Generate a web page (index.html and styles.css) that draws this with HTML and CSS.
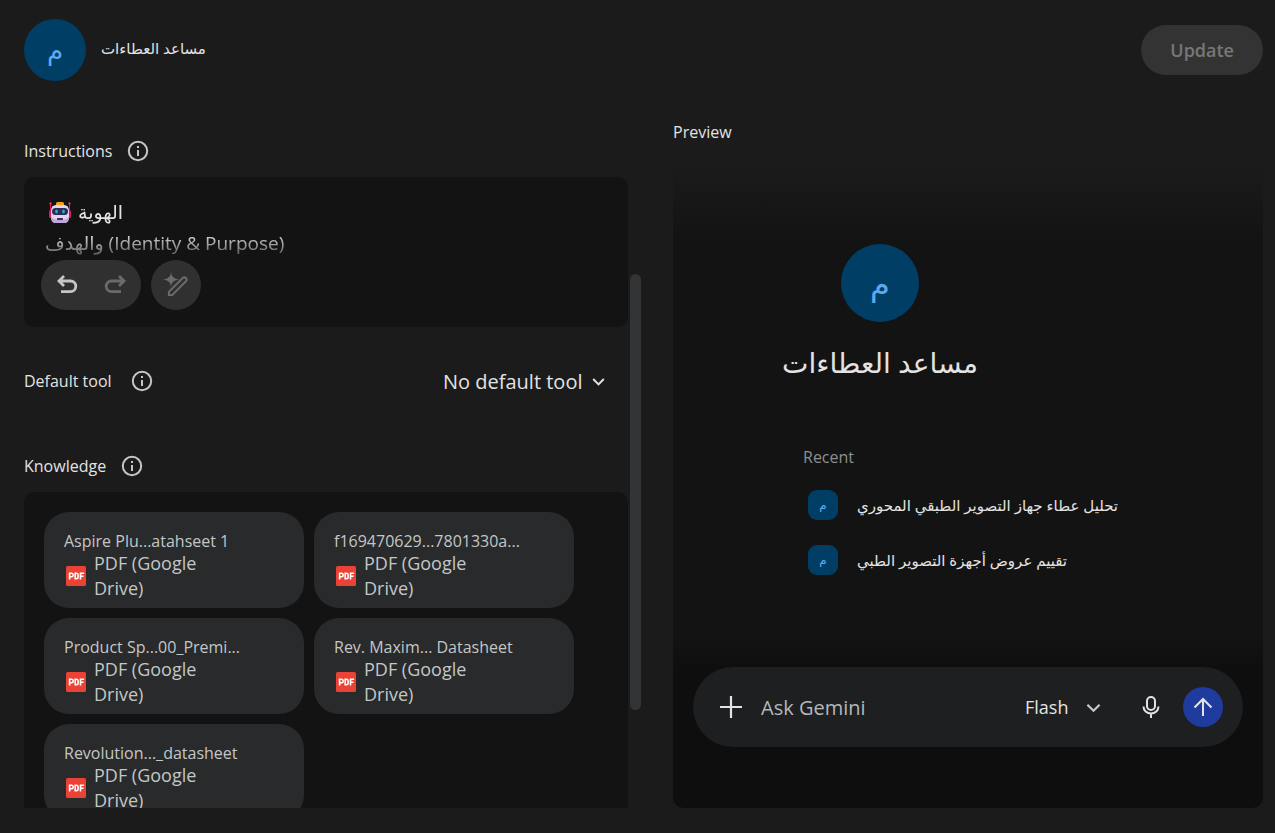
FILE: index.html
```html
<!DOCTYPE html>
<html lang="en">
<head>
    <meta charset="UTF-8">
    <meta name="viewport" content="width=device-width, initial-scale=1.0">
    <title>مساعد العطاءات</title>
    <link rel="stylesheet" href="styles.css">
</head>
<body>
    <svg class="sprite" aria-hidden="true">
        <symbol id="info" viewBox="0 0 22 22">
            <circle cx="11" cy="11" r="9.2" fill="none" stroke="currentColor" stroke-width="2"/>
            <path d="M10 10h2v6h-2zM10 6h2v2h-2z" fill="currentColor"/>
        </symbol>
        <symbol id="chevron" viewBox="0 0 16 16">
            <path d="M1.5 5L8 11.5 14.5 5" fill="none" stroke="currentColor" stroke-width="2.4"/>
        </symbol>
        <symbol id="pdf" viewBox="0 0 20 20">
            <rect width="20" height="20" rx="1.5" fill="#ea4335"/>
            <g fill="none" stroke="#fff" stroke-width="1.6">
                <path d="M3.6 13.5V7.3h2.2q1.4 0 1.4 1.7t-1.4 1.7H3.6"/>
                <path d="M9.2 7.3v5.4h1q1.9 0 1.9-1.7V9q0-1.7-1.9-1.7z"/>
                <path d="M14.5 13.5V7.3h3.6M14.5 10.3h3"/>
            </g>
        </symbol>
    </svg>

    <header class="header">
        <span class="avatar">م</span>
        <h1 class="name">مساعد العطاءات</h1>
        <button class="update" disabled>Update</button>
    </header>

    <main class="main">
        <section class="editor">
            <div class="scroll">
                <div class="row">
                    <label for="instructions">Instructions</label>
                    <button class="info" aria-label="About instructions"><svg><use href="#info"/></svg></button>
                </div>
                <div class="box instructions">
                    <svg class="robot" viewBox="0 0 22 22" aria-hidden="true">
                        <path d="M1.5 1v8M20.5 1v8" stroke="#d81b60" stroke-width="1"/>
                        <circle cx="1.5" cy="1.5" r="1.2" fill="#f0285a"/>
                        <circle cx="20.5" cy="1.5" r="1.2" fill="#f0285a"/>
                        <rect x="0" y="8" width="3" height="8" rx="1.5" fill="#d81b60"/>
                        <rect x="19" y="8" width="3" height="8" rx="1.5" fill="#d81b60"/>
                        <rect x="7" y="0" width="8" height="4" rx="1.5" fill="#f9a11b"/>
                        <path d="M7 3h8q5 0 5 6v6q0 6-5 6H7q-5 0-5-6V9q0-6 5-6z" fill="#e3d4ee"/>
                        <path d="M2.2 15q.3 6 4.8 6h8q4.5 0 4.8-6-2 3-8.8 3t-8.800-3z" fill="#c3a5dd"/>
                        <rect x="3" y="6" width="16" height="7" rx="3.5" fill="#2f2a4f"/>
                        <ellipse cx="7.5" cy="9.5" rx="1.3" ry="2" fill="#27a9ef"/>
                        <ellipse cx="14.5" cy="9.5" rx="1.3" ry="2" fill="#27a9ef"/>
                        <rect x="8" y="16" width="6" height="2" rx=".5" fill="#3b3158"/>
                    </svg>
                    <textarea id="instructions" dir="ltr">الهوية
والهدف (Identity &amp; Purpose)</textarea>
                    <div class="tools">
                        <div class="pill">
                            <button aria-label="Undo">
                                <svg viewBox="0 0 24 24"><path d="M10 3L5 8l5 5M5 8h11.5a5.3 5.3 0 0 1 0 10.600H7" fill="none" stroke="currentColor" stroke-width="2.8"/></svg>
                            </button>
                            <button aria-label="Redo" disabled>
                                <svg viewBox="0 0 24 24"><path d="M15 3l5 5-5 5M20 8H7.5a5.3 5.3 0 0 0 0 10.600H17" fill="none" stroke="currentColor" stroke-width="2.8"/></svg>
                            </button>
                        </div>
                        <button class="round" aria-label="Rewrite" disabled>
                            <svg class="pen" viewBox="0 0 26 26">
                                <path d="M8 0q.3 7 8 7.500-7.700.5-8 7.500-.3-7-8-7.500 7.700-.5 8-7.500z" fill="currentColor"/>
                                <path d="M5.900 23.100v-3.300L19.700 6q1.600-1.500 3.200 0 1.500 1.600 0 3.200L9.200 23.100z" fill="none" stroke="currentColor" stroke-width="2"/>
                            </svg>
                        </button>
                    </div>
                </div>

                <div class="row tool-row">
                    <label for="tool">Default tool</label>
                    <button class="info wide" aria-label="About default tool"><svg><use href="#info"/></svg></button>
                    <span class="select">
                        <select id="tool"><option>No default tool</option></select>
                        <svg><use href="#chevron"/></svg>
                    </span>
                </div>

                <div class="row knowledge-row">
                    <h2>Knowledge</h2>
                    <button class="info" aria-label="About knowledge"><svg><use href="#info"/></svg></button>
                </div>
                <ul class="box files">
                    <li class="file">
                        <h3>Aspire Plu...atahseet 1</h3>
                        <p><svg><use href="#pdf"/></svg><span>PDF (Google Drive)</span></p>
                    </li>
                    <li class="file">
                        <h3>f169470629...7801330a...</h3>
                        <p><svg><use href="#pdf"/></svg><span>PDF (Google Drive)</span></p>
                    </li>
                    <li class="file">
                        <h3>Product Sp...00_Premi...</h3>
                        <p><svg><use href="#pdf"/></svg><span>PDF (Google Drive)</span></p>
                    </li>
                    <li class="file">
                        <h3>Rev. Maxim... Datasheet</h3>
                        <p><svg><use href="#pdf"/></svg><span>PDF (Google Drive)</span></p>
                    </li>
                    <li class="file">
                        <h3>Revolution..._datasheet</h3>
                        <p><svg><use href="#pdf"/></svg><span>PDF (Google Drive)</span></p>
                    </li>
                </ul>
            </div>
            <div class="thumb"></div>
        </section>

        <section class="preview">
            <h2>Preview</h2>
            <div class="chat">
                <div class="hero">
                    <span class="avatar large">م</span>
                    <p class="title">مساعد العطاءات</p>
                </div>
                <div class="recent">
                    <h3>Recent</h3>
                    <a href="#"><span class="avatar small">م</span><span dir="rtl">تحليل عطاء جهاز التصوير الطبقي المحوري</span></a>
                    <a href="#"><span class="avatar small">م</span><span dir="rtl">تقييم عروض أجهزة التصوير الطبي</span></a>
                </div>
                <form class="composer">
                    <button type="button" class="icon" aria-label="Add files">
                        <svg viewBox="0 0 24 24"><path d="M12 1v22M1 12h22" stroke="currentColor" stroke-width="2.2"/></svg>
                    </button>
                    <input type="text" placeholder="Ask Gemini" aria-label="Ask Gemini">
                    <span class="select model">
                        <select aria-label="Model"><option>Flash</option></select>
                        <svg><use href="#chevron"/></svg>
                    </span>
                    <button type="button" class="icon" aria-label="Use microphone">
                        <svg viewBox="0 0 24 24" fill="none" stroke="currentColor" stroke-width="2"><rect x="8" y="2" width="8" height="13" rx="4"/><path d="M4.500 11.500a7.500 7 0 0 0 15 0M12 18.500V23"/></svg>
                    </button>
                    <button type="button" class="send" aria-label="Send">
                        <svg viewBox="0 0 20 20"><path d="M10 19V2M1.500 10.500L10 2l8.500 8.500" fill="none" stroke="currentColor" stroke-width="2"/></svg>
                    </button>
                </form>
            </div>
        </section>
    </main>
</body>
</html>
```
FILE: styles.css
```css
*{
    margin: 0;
    padding: 0;
    box-sizing: border-box;
}
body{
    height: 100vh;
    display: flex;
    flex-direction: column;
    overflow: hidden;
    background-color: #1b1b1b;
    color: #e3e3e3;
    font-family: "Open Sans", "DejaVu Sans", sans-serif;
    font-size: 16px;
    line-height: 20px;
}
h1, h2, h3{
    font-size: 16px;
    font-weight: 500;
}
button, select, input, textarea{
    border: 0;
    background: none;
    color: inherit;
    font: inherit;
    outline: none;
}
button{
    display: flex;
    align-items: center;
    justify-content: center;
}
label{
    font-weight: 500;
}
.sprite{
    position: absolute;
    width: 0;
    height: 0;
}
.header{
    display: flex;
    align-items: center;
    gap: 15px;
    height: 100px;
    padding: 0 12px 0 24px;
}
.avatar{
    display: flex;
    align-items: center;
    justify-content: center;
    flex: none;
    width: 62px;
    height: 62px;
    border-radius: 50%;
    background-color: #003e66;
    color: #5ca9ee;
    font-size: 26px;
}
.name{
    flex: 1;
    padding-bottom: 4px;
    font-size: 15px;
}
.update{
    height: 50px;
    padding: 0 29px;
    border-radius: 25px;
    background-color: #333;
    color: #777;
    font-size: 18px;
    font-weight: 600;
}
.main{
    flex: 1;
    min-height: 0;
    display: grid;
    grid-template-columns: 617fr 590fr;
    gap: 32px;
    padding: 0 12px 25px 24px;
}

/* left side */
.editor{
    position: relative;
    min-height: 0;
    padding-right: 13px;
}
.scroll{
    height: 100%;
    padding-top: 35px;
    overflow: hidden;
}
.thumb{
    position: absolute;
    right: 0;
    top: 174px;
    width: 11px;
    height: 436px;
    border-radius: 6px;
    background-color: #333436;
}
.row{
    display: flex;
    align-items: center;
    gap: 15px;
    height: 32px;
    margin-bottom: 10px;
}
.info svg{
    width: 22px;
    height: 22px;
    color: #c4c7c5;
}
.wide{
    margin-left: 4px;
}
.box{
    border-radius: 10px;
    background-color: #131313;
}
.instructions{
    position: relative;
    height: 150px;
    padding: 17px;
}
.robot{
    position: absolute;
    left: 25px;
    top: 25px;
    width: 22px;
    height: 22px;
}
.instructions textarea{
    display: block;
    width: 100%;
    height: 66px;
    padding: 3px 4px;
    overflow: hidden;
    resize: none;
    font-size: 19px;
    font-weight: 500;
    line-height: 31px;
    text-indent: 33px;
    -webkit-mask-image: linear-gradient(#000 60%, transparent 110%);
    mask-image: linear-gradient(#000 60%, transparent 110%);
}
.tools{
    display: flex;
    gap: 10px;
}
.tools button{
    width: 50px;
    height: 50px;
    color: #c4c7c5;
}
.tools button:disabled{
    color: #6b6b6b;
}
.tools svg{
    width: 24px;
    height: 24px;
}
.tools .pen{
    width: 26px;
    height: 26px;
}
.pill{
    display: flex;
    border-radius: 25px;
    background-color: #303030;
}
.round{
    border-radius: 50%;
    background-color: #303030;
}
.tool-row{
    height: 40px;
    margin-top: 34px;
}
.select{
    display: flex;
    align-items: center;
    gap: 9px;
    margin-left: auto;
    padding-right: 23px;
    font-size: 20px;
    line-height: 25px;
}
.select select{
    appearance: none;
}
.select svg{
    width: 13px;
    height: 13px;
}
.knowledge-row{
    margin-top: 49px;
}
.files{
    display: grid;
    grid-template-columns: repeat(auto-fill, 260px);
    gap: 10px;
    padding: 20px;
    list-style: none;
}
.file{
    height: 96px;
    padding: 20px 20px 6px;
    border-radius: 25px;
    background-color: #282a2c;
    color: #c4c7c5;
}
.file h3{
    font-weight: 400;
    line-height: 19px;
}
.file p{
    display: flex;
    align-items: center;
    gap: 8px;
    padding: 0 60px 0 2px;
    font-size: 18px;
    line-height: 25px;
}
.file svg{
    flex: none;
    width: 20px;
    height: 20px;
}

/* right side */
.preview{
    display: flex;
    flex-direction: column;
    gap: 20px;
    min-height: 0;
    padding-top: 22px;
}
.chat{
    flex: 1;
    display: flex;
    flex-direction: column;
    padding: 82px 20px 61px;
    border-radius: 10px;
    background: linear-gradient(#1b1b1b, #131313 80px, #131313 470px, #0e0e0e 510px);
}
.hero{
    display: flex;
    flex-direction: column;
    align-items: center;
    gap: 18px;
    width: 68%;
}
.large{
    width: 78px;
    height: 78px;
    font-size: 32px;
}
.title{
    font-size: 28px;
    line-height: 44px;
}
.recent{
    display: flex;
    flex-direction: column;
    gap: 25px;
    margin: 63px 0 0 110px;
}
.recent h3{
    margin-bottom: -2px;
    color: #8e8e8e;
    font-weight: 400;
}
.recent a{
    display: flex;
    align-items: center;
    gap: 19px;
    padding-left: 5px;
    color: inherit;
    font-size: 15px;
    text-decoration: none;
}
.small{
    width: 30px;
    height: 30px;
    border-radius: 9px;
    font-size: 12px;
}
.composer{
    display: flex;
    align-items: center;
    height: 80px;
    margin-top: auto;
    padding: 0 20px 0 26px;
    border-radius: 40px;
    background-color: #1e1f20;
}
.composer input{
    flex: 1;
    min-width: 0;
    padding-left: 18px;
    font-size: 20px;
}
.composer input::placeholder{
    color: #b4b8bb;
    opacity: 1;
}
.icon svg{
    width: 24px;
    height: 24px;
}
.model{
    gap: 17px;
    padding-right: 38px;
    font-size: 18px;
}
.model svg{
    width: 15px;
    height: 15px;
    color: #c4c7c5;
}
.send{
    width: 40px;
    height: 40px;
    margin-left: 20px;
    border-radius: 50%;
    background-color: #1f3b9d;
}
.send svg{
    width: 20px;
    height: 20px;
}
```
